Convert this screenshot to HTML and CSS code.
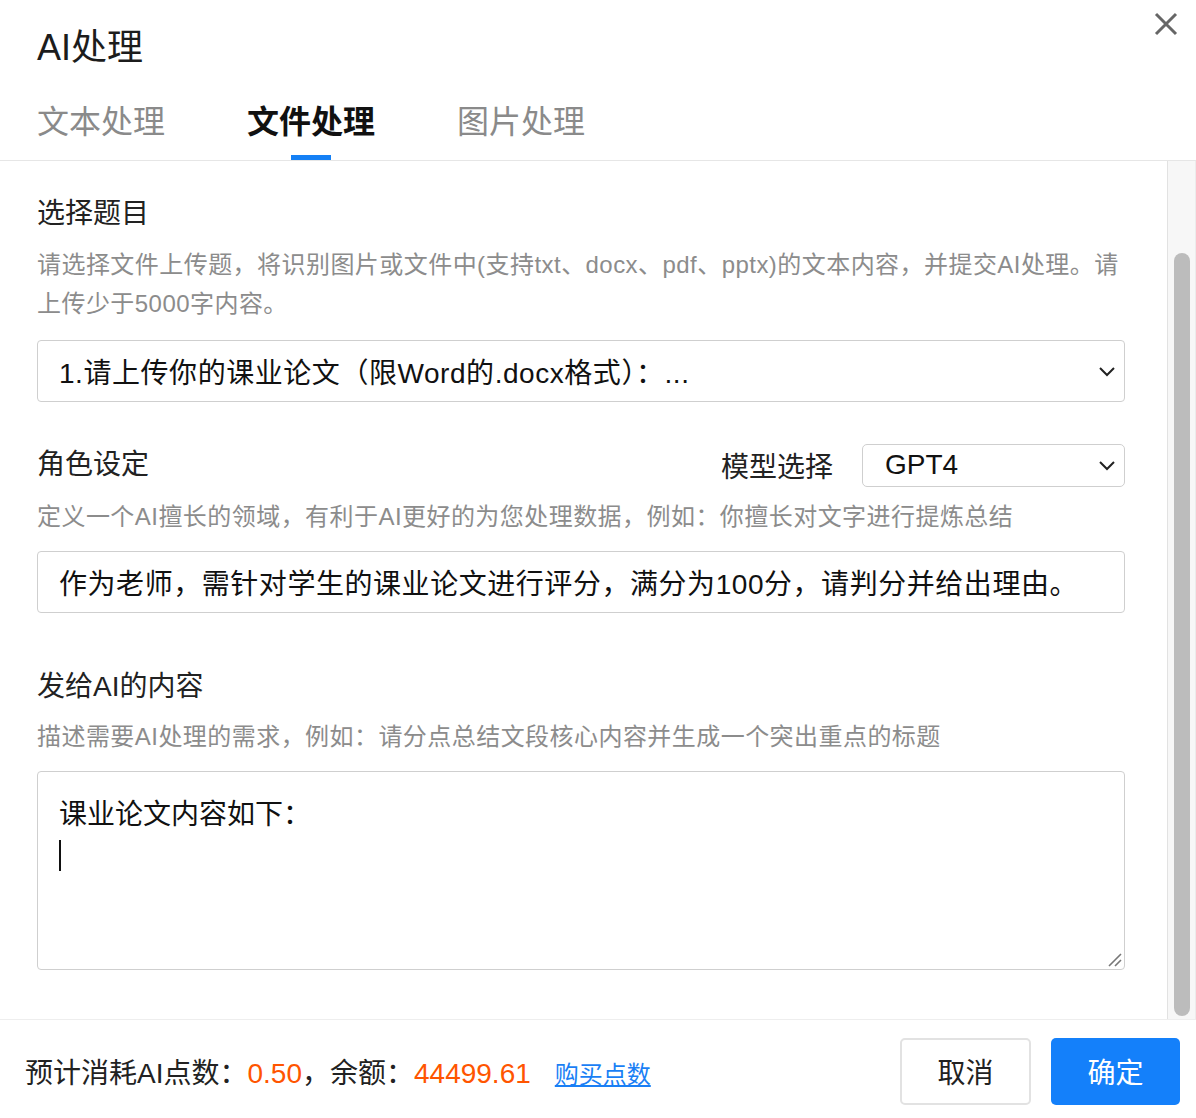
FILE: index.html
```html
<!DOCTYPE html>
<html lang="zh-CN">
<head>
<meta charset="utf-8">
<title>AI处理</title>
<link rel="stylesheet" href="styles.css">
</head>
<body>
<div class="dialog">
  <header class="header">
    <h1 class="title">AI处理</h1>
    <button class="close" aria-label="关闭">
      <svg width="24" height="24" viewBox="0 0 24 24"><path d="M2 2 L22 22 M22 2 L2 22" stroke="#666" stroke-width="3" fill="none"/></svg>
    </button>
    <nav class="tabs">
      <div class="tab">文本处理</div>
      <div class="tab active">文件处理</div>
      <div class="tab">图片处理</div>
    </nav>
  </header>

  <div class="body">
    <main class="content">
      <div class="label sec1">选择题目</div>
      <div class="desc d1">请选择文件上传题，将识别图片或文件中(支持txt、docx、pdf、pptx)的文本内容，并提交AI处理。请<br>上传少于5000字内容。</div>
      <div class="field select-field">
        <span class="field-text">1.请上传你的课业论文（限Word的.docx格式）：...</span>
        <svg class="chev" width="18" height="12" viewBox="0 0 18 12"><path d="M2 3 L9 10 L16 3" stroke="#222" stroke-width="2" fill="none"/></svg>
      </div>

      <div class="role-row">
        <div class="label">角色设定</div>
        <div class="model">
          <span class="model-label">模型选择</span>
          <div class="model-select">
            <span>GPT4</span>
            <svg class="chev" width="18" height="12" viewBox="0 0 18 12"><path d="M2 3 L9 10 L16 3" stroke="#222" stroke-width="2" fill="none"/></svg>
          </div>
        </div>
      </div>
      <div class="desc d2">定义一个AI擅长的领域，有利于AI更好的为您处理数据，例如：你擅长对文字进行提炼总结</div>
      <div class="field input-field">
        <span class="field-text">作为老师，需针对学生的课业论文进行评分，满分为100分，请判分并给出理由。</span>
      </div>

      <div class="label sec3">发给AI的内容</div>
      <div class="desc d2">描述需要AI处理的需求，例如：请分点总结文段核心内容并生成一个突出重点的标题</div>
      <div class="textarea">
        <div class="ta-line">课业论文内容如下：</div>
        <div class="ta-line"><span class="caret"></span></div>
        <svg class="resize" width="16" height="16" viewBox="0 0 16 16"><path d="M15 3 L3 15 M15 9 L9 15" stroke="#777" stroke-width="1.6" fill="none"/></svg>
      </div>
    </main>
    <div class="scrollbar"><div class="thumb"></div></div>
  </div>

  <footer class="footer">
    <div class="cost">预计消耗AI点数：<span class="num">0.50</span>，余额：<span class="num">44499.61</span><a class="buy" href="#">购买点数</a></div>
    <div class="actions">
      <button class="btn cancel">取消</button>
      <button class="btn ok">确定</button>
    </div>
  </footer>
</div>
</body>
</html>
```

FILE: styles.css
```css
* { box-sizing: border-box; }
html, body { margin: 0; padding: 0; }
body {
  width: 1196px;
  height: 1118px;
  background: #fff;
  font-family: "Liberation Sans", "Noto Sans CJK SC", sans-serif;
  color: #222;
  overflow: hidden;
}
.dialog {
  height: 1118px;
  display: flex;
  flex-direction: column;
}
.header {
  position: relative;
  height: 161px;
  padding-left: 37px;
  border-bottom: 1px solid #e6e6e6;
  flex: none;
}
.title {
  margin: 0;
  height: 92px;
  line-height: 96px;
  font-size: 36px;
  font-weight: normal;
  color: #1c1c1c;
}
.close {
  position: absolute;
  left: 1154px;
  top: 12px;
  width: 24px;
  height: 24px;
  padding: 0;
  border: 0;
  background: none;
}
.close svg { display: block; }
.tabs {
  display: flex;
  gap: 82px;
  height: 68px;
}
.tab {
  position: relative;
  font-size: 32px;
  line-height: 60px;
  color: #8a8a8a;
  width: 128px;
  white-space: nowrap;
}
.tab.active {
  color: #111;
  font-weight: bold;
}
.tab.active::after {
  content: "";
  position: absolute;
  left: 44px;
  bottom: 0;
  width: 40px;
  height: 5px;
  background: #1480f5;
}
.body {
  flex: 1;
  display: flex;
  min-height: 0;
  border-bottom: 1px solid #eeeeee;
}
.content {
  width: 1167px;
  padding: 0 42px 0 37px;
}
.label {
  font-size: 28px;
  line-height: 40px;
  color: #222;
}
.sec1 { margin-top: 33px; }
.sec3 { margin-top: 54px; }
.desc {
  font-size: 24px;
  line-height: 39px;
  color: #8c8c8c;
  letter-spacing: 0.45px;
}
.d1 { margin-top: 11px; }
.d2 { margin-top: 10px; }
.field {
  display: flex;
  align-items: center;
  justify-content: space-between;
  height: 62px;
  border: 1px solid #cfcfcf;
  border-radius: 4px;
  padding: 0 8px 0 21px;
  font-size: 28px;
  color: #111;
}
.select-field { margin-top: 17px; }
.input-field { margin-top: 15px; }
.field-text { white-space: nowrap; letter-spacing: 0.55px; }
.chev { display: block; flex: none; }
.role-row {
  margin-top: 41px;
  display: flex;
  justify-content: space-between;
  align-items: center;
  height: 44px;
}
.model {
  display: flex;
  align-items: center;
  gap: 29px;
}
.model-label {
  font-size: 28px;
  color: #222;
}
.model-select {
  width: 263px;
  height: 43px;
  border: 1px solid #cfcfcf;
  border-radius: 5px;
  display: flex;
  align-items: center;
  justify-content: space-between;
  padding: 0 8px 0 22px;
  font-size: 28px;
  color: #111;
}
.textarea {
  position: relative;
  margin-top: 15px;
  height: 199px;
  border: 1px solid #cfcfcf;
  border-radius: 4px;
  padding: 22px 21px 20px;
  font-size: 28px;
  color: #111;
}
.ta-line {
  line-height: 41px;
  height: 41px;
  display: flex;
  align-items: center;
}
.caret {
  display: block;
  width: 2px;
  height: 31px;
  background: #111;
}
.resize {
  position: absolute;
  right: 2px;
  bottom: 2px;
}
.scrollbar {
  width: 29px;
  background: #f7f7f7;
  border-left: 1px solid #e2e2e2;
  border-right: 1px solid #ececec;
  padding: 92px 5px 3px 6px;
}
.thumb {
  height: 100%;
  width: 16px;
  background: #bcbcbc;
  border-radius: 8px;
}
.footer {
  flex: none;
  height: 98px;
  display: flex;
  align-items: center;
  justify-content: space-between;
  padding: 4px 16px 0 25px;
}
.cost {
  font-size: 28px;
  color: #222;
  white-space: nowrap;
}
.num { color: #ff5500; }
.buy {
  margin-left: 24px;
  font-size: 24px;
  color: #1a7ff5;
  text-decoration: underline;
}
.actions {
  display: flex;
  gap: 20px;
}
.btn {
  height: 67px;
  border-radius: 5px;
  font-size: 28px;
  font-family: "Liberation Sans", "Noto Sans CJK SC", sans-serif;
  padding: 0;
}
.cancel {
  width: 131px;
  background: #fff;
  border: 2px solid #e2e2e2;
  color: #222;
}
.ok {
  width: 129px;
  background: #1480fa;
  border: 0;
  color: #fff;
}
```
